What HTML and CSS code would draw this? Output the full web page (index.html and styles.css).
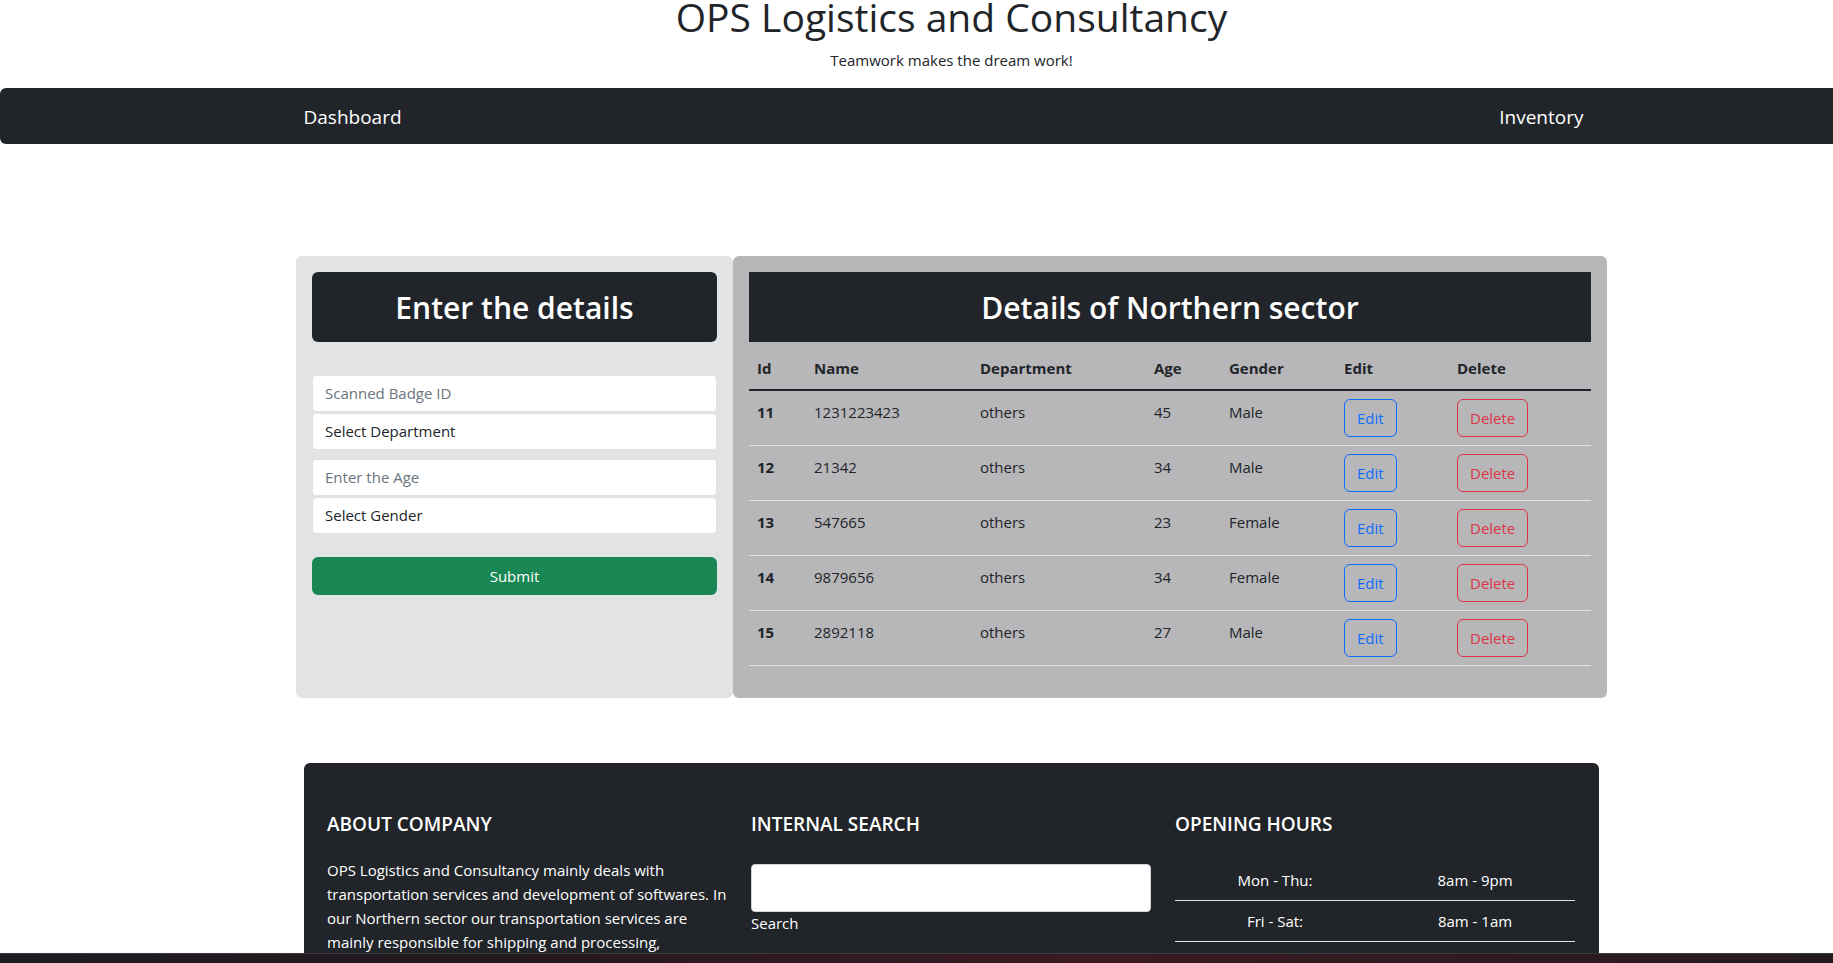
FILE: index.html
```html
<!DOCTYPE html>
<html lang="en">
<head>
<meta charset="utf-8">
<title>OPS Logistics and Consultancy</title>
<link rel="stylesheet" href="styles.css">
</head>
<body>
<div class="page">
  <header class="masthead">
    <h1 class="site-title">OPS Logistics and Consultancy</h1>
    <p class="tagline">Teamwork makes the dream work!</p>
  </header>

  <nav class="topnav">
    <div class="topnav-inner">
      <a class="nav-brand" href="#">Dashboard</a>
      <a class="nav-link" href="#">Inventory</a>
    </div>
  </nav>

  <main class="workspace">
    <section class="entry-panel">
      <div class="panel-head panel-head-rounded"><h2>Enter the details</h2></div>
      <form class="entry-form">
        <div class="field-group">
          <input class="field" type="text" placeholder="Scanned Badge ID">
          <select class="field"><option>Select Department</option></select>
        </div>
        <div class="field-group">
          <input class="field" type="text" placeholder="Enter the Age">
          <select class="field"><option>Select Gender</option></select>
        </div>
        <button class="btn-submit" type="button">Submit</button>
      </form>
    </section>

    <section class="records-panel">
      <div class="panel-head"><h2>Details of Northern sector</h2></div>
      <table class="records">
        <colgroup>
          <col class="c-id"><col class="c-name"><col class="c-dept"><col class="c-age"><col class="c-gender"><col class="c-edit"><col class="c-del">
        </colgroup>
        <thead>
          <tr><th>Id</th><th>Name</th><th>Department</th><th>Age</th><th>Gender</th><th>Edit</th><th>Delete</th></tr>
        </thead>
        <tbody>
          <tr><th>11</th><td>1231223423</td><td>others</td><td>45</td><td>Male</td><td class="cell-action"><button class="btn-line btn-edit" type="button">Edit</button></td><td class="cell-action"><button class="btn-line btn-delete" type="button">Delete</button></td></tr>
          <tr><th>12</th><td>21342</td><td>others</td><td>34</td><td>Male</td><td class="cell-action"><button class="btn-line btn-edit" type="button">Edit</button></td><td class="cell-action"><button class="btn-line btn-delete" type="button">Delete</button></td></tr>
          <tr><th>13</th><td>547665</td><td>others</td><td>23</td><td>Female</td><td class="cell-action"><button class="btn-line btn-edit" type="button">Edit</button></td><td class="cell-action"><button class="btn-line btn-delete" type="button">Delete</button></td></tr>
          <tr><th>14</th><td>9879656</td><td>others</td><td>34</td><td>Female</td><td class="cell-action"><button class="btn-line btn-edit" type="button">Edit</button></td><td class="cell-action"><button class="btn-line btn-delete" type="button">Delete</button></td></tr>
          <tr><th>15</th><td>2892118</td><td>others</td><td>27</td><td>Male</td><td class="cell-action"><button class="btn-line btn-edit" type="button">Edit</button></td><td class="cell-action"><button class="btn-line btn-delete" type="button">Delete</button></td></tr>
        </tbody>
      </table>
    </section>
  </main>

  <footer class="site-footer">
    <div class="footer-col">
      <h5 class="footer-title">About Company</h5>
      <p class="footer-text">OPS Logistics and Consultancy mainly deals with transportation services and development of softwares. In our Northern sector our transportation services are mainly responsible for shipping and processing, warehousing and delivering goods across the region.</p>
    </div>
    <div class="footer-col">
      <h5 class="footer-title">Internal Search</h5>
      <input class="search-box" type="text" aria-label="Search">
      <label class="search-label">Search</label>
    </div>
    <div class="footer-col">
      <h5 class="footer-title">Opening Hours</h5>
      <table class="hours">
        <tr><td>Mon - Thu:</td><td>8am - 9pm</td></tr>
        <tr><td>Fri - Sat:</td><td>8am - 1am</td></tr>
      </table>
    </div>
  </footer>
</div>
<div class="taskbar"></div>
</body>
</html>
```

FILE: styles.css
```css
html, body {
  margin: 0;
  overflow-x: hidden;
}

body {
  font-family: "Segoe UI", "Open Sans", "Noto Sans", sans-serif;
  font-size: 16px;
  line-height: 1.5;
  color: #212529;
  background: #fff;
}

.page {
  width: 1903px;
  padding-bottom: 60px;
}

/* ---------- masthead ---------- */
.masthead {
  text-align: center;
}

.site-title {
  font-size: 39px;
  font-weight: 500;
  line-height: 1.2;
  margin: -6px 0 0;
}

.tagline {
  font-size: 15px;
  margin: 8px 0 16.5px;
}

/* ---------- nav ---------- */
.topnav {
  height: 56px;
  background: #212529;
  border-radius: 6px;
  display: flex;
  align-items: center;
}

.topnav-inner {
  width: 1296px;
  margin: 0 auto;
  display: flex;
  justify-content: space-between;
  align-items: center;
}

.nav-brand,
.nav-link {
  color: #fff;
  text-decoration: none;
  font-size: 19px;
  padding-top: 2px;
}

.nav-link {
  padding-right: 16px;
}

/* ---------- workspace ---------- */
.workspace {
  width: 1311px;
  margin: 112px auto 0;
  display: flex;
}

.entry-panel {
  width: 437px;
  flex: none;
  box-sizing: border-box;
  padding: 16px;
  background: #e2e3e5;
  border-radius: 6px;
}

.records-panel {
  flex: 1;
  box-sizing: border-box;
  padding: 16px 16px 32px;
  background: #b7b7b9;
  border-radius: 6px;
}

.panel-head {
  height: 70px;
  box-sizing: border-box;
  padding-top: 3px;
  background: #212529;
  color: #fff;
  display: flex;
  align-items: center;
  justify-content: center;
}

.panel-head-rounded {
  border-radius: 6px;
}

.panel-head h2 {
  margin: 0;
  font-size: 30px;
  font-weight: 600;
  line-height: 1.2;
}

/* ---------- form ---------- */
.entry-form {
  margin-top: 33px;
  display: flex;
  flex-direction: column;
}

.field-group {
  display: flex;
  flex-direction: column;
  gap: 1px;
}

.field-group + .field-group {
  margin-top: 9px;
}

.field {
  height: 37px;
  box-sizing: border-box;
  border: 1px solid #dee2e6;
  border-radius: 4px;
  padding: 0 12px;
  font: inherit;
  font-size: 15px;
  color: #212529;
  background: #fff;
  appearance: none;
  -webkit-appearance: none;
  outline: none;
}

.field::placeholder {
  color: #6c757d;
}

.btn-submit {
  margin-top: 23px;
  height: 38px;
  border: 0;
  border-radius: 6px;
  background: #198754;
  color: #fff;
  font: inherit;
  font-size: 15px;
}

/* ---------- records table ---------- */
.records {
  width: 100%;
  margin-top: 9px;
  border-collapse: collapse;
  table-layout: fixed;
}

.c-id { width: 57px; }
.c-name { width: 166px; }
.c-dept { width: 174px; }
.c-age { width: 75px; }
.c-gender { width: 115px; }
.c-edit { width: 113px; }
.c-del { width: 142px; }

.records th,
.records td {
  padding: 8px;
  text-align: left;
  vertical-align: top;
  font-size: 15px;
  border-bottom: 1px solid #dee2e6;
}

.records thead th {
  padding: 6px 8px 10px;
  border-bottom: 2px solid #212529;
}

.records tbody th,
.records tbody td {
  padding: 10px 8px 6px;
}

.records tbody td.cell-action {
  padding: 8px;
}

.records th {
  font-weight: 700;
}

.btn-line {
  background: transparent;
  border: 1px solid;
  border-radius: 6px;
  padding: 6px 12px;
  font: inherit;
  font-size: 15px;
  line-height: 24px;
}

.btn-edit {
  color: #0d6efd;
  border-color: #0d6efd;
}

.btn-delete {
  color: #dc3545;
  border-color: #dc3545;
}

/* ---------- footer ---------- */
.site-footer {
  width: 1295px;
  box-sizing: border-box;
  margin: 65px auto 0;
  padding: 50px 23px 48px;
  background: #212529;
  color: #fff;
  border-radius: 6px 6px 0 0;
  display: grid;
  grid-template-columns: repeat(3, 400px);
  column-gap: 24px;
}

.footer-title {
  margin: 0 0 21px;
  font-size: 19px;
  font-weight: 600;
  line-height: 1.25;
  text-transform: uppercase;
}

.footer-text {
  margin: 0;
  font-size: 15px;
  line-height: 24px;
}

.search-box {
  display: block;
  width: 100%;
  height: 48px;
  box-sizing: border-box;
  margin-top: 27px;
  border: 1px solid #ced4da;
  border-radius: 4px;
  background: #fff;
}

.search-label {
  display: block;
  font-size: 15px;
}

.hours {
  width: 100%;
  border-collapse: collapse;
  margin-top: 23px;
}

.hours td {
  width: 50%;
  padding: 8px;
  text-align: center;
  font-size: 15px;
  line-height: 24px;
  border-bottom: 1px solid #dee2e6;
}

/* ---------- OS taskbar edge at the bottom of the capture ---------- */
.taskbar {
  position: fixed;
  left: 0;
  right: 0;
  bottom: 0;
  height: 9px;
  border-top: 1px solid #3b3b40;
  background: linear-gradient(90deg, #1c1c21 0%, #25191d 30%, #3a1b21 60%, #2c1a1e 85%, #241a1d 100%);
}
```
